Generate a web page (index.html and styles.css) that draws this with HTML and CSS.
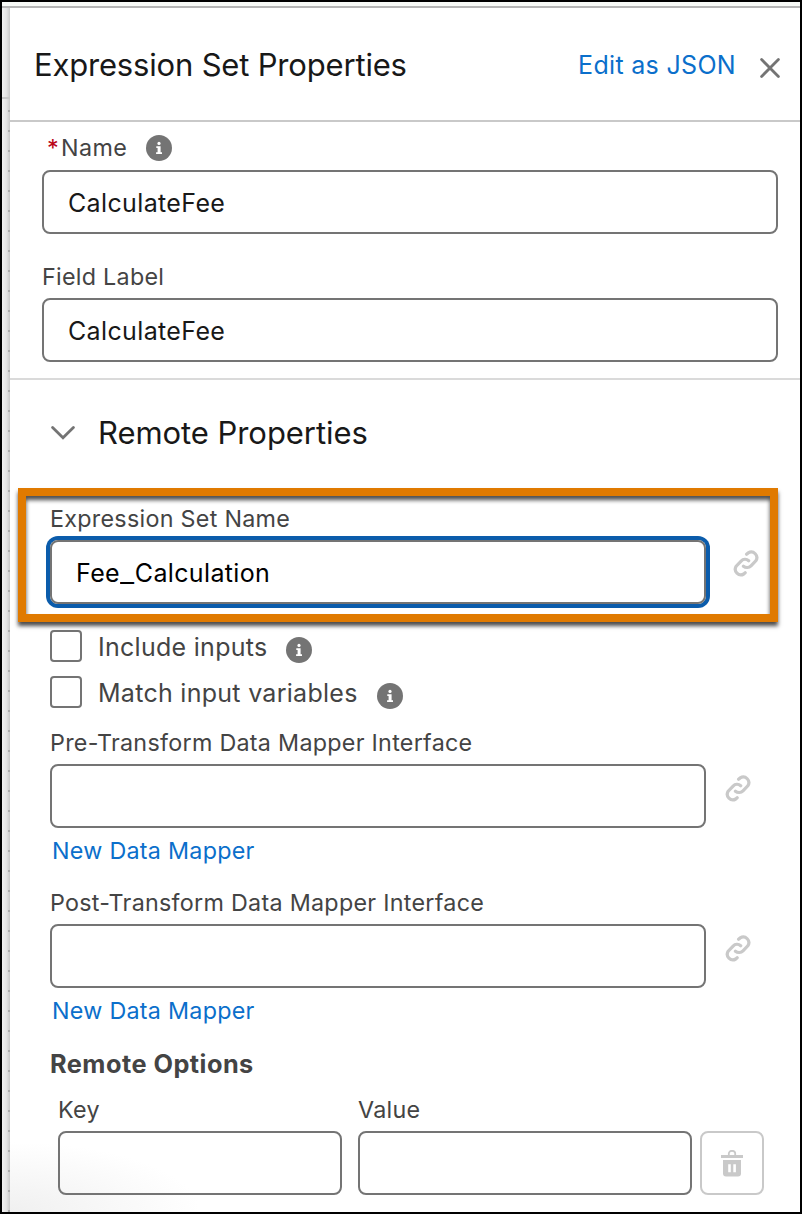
FILE: index.html
```html
<!DOCTYPE html>
<html lang="en">
<head>
<meta charset="utf-8">
<title>Expression Set Properties</title>
<link rel="stylesheet" href="styles.css">
</head>
<body>
<svg class="defs" width="0" height="0" aria-hidden="true">
  <symbol id="info" viewBox="0 0 26 26">
    <circle cx="13" cy="13" r="13" fill="#747474"/>
    <circle cx="13" cy="8.4" r="1.6" fill="#fff"/>
    <path d="M10.3 11.2h4.3v6h1.4v1.7h-5.9v-1.7h1.5v-4.3h-1.3z" fill="#fff"/>
  </symbol>
  <symbol id="link" viewBox="0 0 26 27">
    <g fill="none" stroke="#c9c9c9" stroke-width="3.2" stroke-linecap="round">
      <path d="M13.6 4.2 15.2 2.9A5.6 5.6 0 0 1 22.800 10.8L18 15.8A5.6 5.6 0 0 1 10.4 16.2"/>
      <path d="M12.2 22.8 10.8 24A5.6 5.6 0 0 1 3.200 16.2L8.1 11.1A5.6 5.6 0 0 1 15.7 10.8"/>
    </g>
  </symbol>
</svg>
<div class="window">
  <div class="topbar"></div>
  <div class="stage">
    <div class="canvas"><div class="canvas-head"></div><div class="canvas-dots"></div></div>
    <main class="panel">
      <header class="head">
        <h1 class="title">Expression Set Properties</h1>
        <a class="json">Edit as JSON</a>
        <svg class="close" viewBox="0 0 20 20"><path d="M1.6 1.6 18.4 18.4M18.4 1.6 1.6 18.4" fill="none" stroke="#747474" stroke-width="2.8" stroke-linecap="round"/></svg>
      </header>
      <section class="general">
        <div class="label label-name"><span class="req">*</span><span>Name</span><svg class="info"><use href="#info"/></svg></div>
        <div class="input"><span>CalculateFee</span></div>
        <div class="label label-field"><span>Field Label</span></div>
        <div class="input"><span>CalculateFee</span></div>
      </section>
      <section class="remote">
        <div class="section-head">
          <svg class="chevron" viewBox="0 0 24 14"><path d="M1.6 1.6 12 11.8 22.4 1.6" fill="none" stroke="#747474" stroke-width="2.8" stroke-linecap="round"/></svg>
          <h2 class="subtitle">Remote Properties</h2>
        </div>
        <div class="highlighted">
          <div class="label"><span>Expression Set Name</span></div>
          <div class="row"><div class="input focused"><span>Fee<span class="underscore">_</span>Calculation</span></div><svg class="link link-first"><use href="#link"/></svg></div>
          <div class="highlight"></div>
        </div>
        <div class="checks">
          <div class="check"><span class="box"></span><span class="check-text">Include inputs</span><svg class="info"><use href="#info"/></svg></div>
          <div class="check"><span class="box"></span><span class="check-text">Match input variables</span><svg class="info"><use href="#info"/></svg></div>
        </div>
        <div class="mapper">
          <div class="label"><span>Pre-Transform Data Mapper Interface</span></div>
          <div class="row"><div class="input"></div><svg class="link"><use href="#link"/></svg></div>
          <a class="new">New Data Mapper</a>
        </div>
        <div class="mapper">
          <div class="label"><span>Post-Transform Data Mapper Interface</span></div>
          <div class="row"><div class="input"></div><svg class="link"><use href="#link"/></svg></div>
          <a class="new">New Data Mapper</a>
        </div>
        <h3 class="options-title">Remote Options</h3>
        <div class="options">
          <div class="label">Key</div><div class="label">Value</div><div></div>
          <div class="input"></div><div class="input"></div>
          <div class="trash"><svg width="22" height="27" viewBox="0 0 22 27"><path d="M0 5h22v3H0z" fill="#c9c9c9"/><path d="M7.8 5V3.6a3.2 2.8 0 0 1 6.4 0V5" fill="none" stroke="#c9c9c9" stroke-width="1.8"/><path fill-rule="evenodd" d="M2 10h18v13.500a3 3 0 0 1-3 3H5a3 3 0 0 1-3-3zM7.200 14.300v8h2.600v-8zM12.300 14.300v8h2.600v-8z" fill="#c9c9c9"/></svg></div>
        </div>
      </section>
    </main>
  </div>
</div>
</body>
</html>
```
FILE: styles.css
```css
* { box-sizing: border-box; }
body { margin: 0; font-family: Inter, "Liberation Sans", sans-serif; color: #444; background: #fff; }
.defs { display: block; position: absolute; }
h1, h2, h3 { margin: 0; font-weight: 400; }
span, h1, h2, a { white-space: nowrap; }
svg { flex: none; }
.window { width: 802px; height: 1214px; border: 2px solid #000; display: flex; flex-direction: column; overflow: hidden; }
.topbar { height: 6px; flex: none; border-bottom: 2px solid #b5b5b5; background: #f8faf7; }
.stage { flex: 1; display: flex; min-height: 0; }
.canvas { width: 8px; background: linear-gradient(90deg, #f1f1f1, #e4e4e4 55%, #c9c9c9); }
.canvas-head { height: 91px; border-bottom: 2px solid #c9c9c9; }
.canvas-dots { height: 1113px; background: repeating-linear-gradient(#aaa 0 2px, transparent 2px 20px) 6px 11px / 2px 20px repeat-y; }
.panel { flex: 1; background: radial-gradient(ellipse 190px 70px at 0 100%, #f0f0f0, #fff); }

.head { height: 114px; border-bottom: 2px solid #c9c9c9; display: flex; align-items: center; padding: 2px 20px 0 24px; }
.title { font-size: 31px; line-height: 40px; letter-spacing: -0.18px; color: #181818; flex: 1; }
.json { font-size: 25px; line-height: 32px; letter-spacing: 0.32px; color: #0b6fcb; }
.close { width: 20px; height: 20px; margin: 6px 0 0 24px; }

.general { height: 258px; padding: 0 22px 0 32px; border-bottom: 2px solid #dadada; }
.label { height: 32px; font-size: 23.3px; line-height: 32px; letter-spacing: 0.28px; }
.label-name { height: 48px; padding: 4px 0 0 5px; display: flex; align-items: center; line-height: 32px; letter-spacing: 0.4px; }
.req { color: #ba0517; width: 14px; }
.info { width: 26px; height: 26px; }
.label-name .info { margin-left: 19px; }
.label-field { height: 64px; padding-top: 27px; }
.input { height: 64px; border: 2px solid #747474; border-radius: 8px; padding-left: 24px; font-size: 25px; line-height: 62px; letter-spacing: 0.36px; color: #181818; background: transparent; }

.remote { padding-left: 40px; }
.section-head { height: 108px; display: flex; align-items: center; gap: 23px; padding: 0 0 2px 1px; }
.chevron { width: 24px; height: 14px; margin-top: -1px; }
.subtitle { font-size: 31px; line-height: 40px; letter-spacing: -0.06px; color: #181818; }
.highlighted { position: relative; height: 134px; padding-top: 15px; }
.highlighted .label { height: 37px; }
.highlight { position: absolute; left: -32px; top: 0; width: 760px; height: 134px; border: 8px solid #e07a00; box-shadow: 0 4px 4px rgba(0,0,0,.7), inset 0 4px 4px rgba(0,0,0,.7); }
.row { display: flex; align-items: flex-start; }
.row .input { width: 656px; }
.focused { box-shadow: 0 0 0 4px #0b5cab; color: #000; }
.underscore { display: inline-block; line-height: 1; transform: scaleX(1.24); transform-origin: 0 50%; margin-right: 3px; }
.link { width: 26px; height: 27px; margin: 11px 0 0 19px; }
.link-first { margin: 10px 0 0 27px; }

.checks { padding-top: 8px; height: 104px; display: flex; flex-direction: column; gap: 14px; }
.check { height: 32px; display: flex; align-items: center; }
.box { width: 32px; height: 32px; border: 2px solid #747474; border-radius: 4px; margin-right: 16px; }
.check-text { font-size: 25px; line-height: 32px; letter-spacing: 0.28px; padding-top: 2px; }
.check .info { margin: 7px 0 0 19px; }
.mapper { height: 160px; }
.mapper .label { height: 38px; line-height: 34px; }
.new { display: block; padding-left: 2px; font-size: 23.3px; line-height: 46px; letter-spacing: 0.27px; color: #0b6fcb; }
.options-title { font-size: 25.3px; line-height: 36px; font-weight: 700; letter-spacing: 0.48px; }
.options { display: grid; grid-template-columns: 284px 334px 64px; column-gap: 16px; padding: 13px 0 0 8px; }
.options .label { height: 36px; line-height: 30px; }
.trash { width: 64px; height: 64px; margin-left: -8px; border: 2px solid #c9c9c9; border-radius: 8px; display: flex; align-items: center; justify-content: center; }
```
